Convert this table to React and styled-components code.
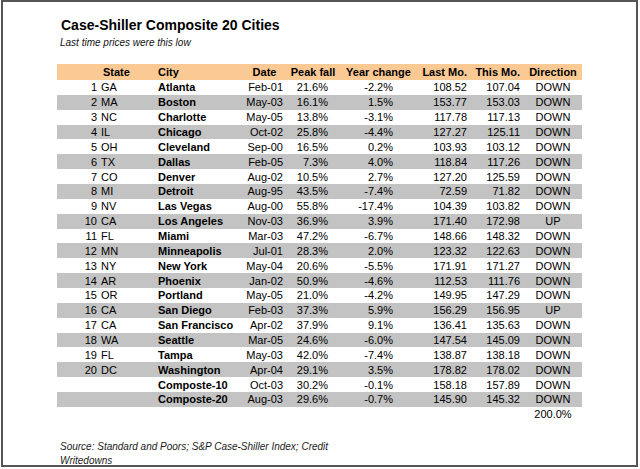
import React from 'react';
import styled, { createGlobalStyle } from 'styled-components';

const GlobalStyle = createGlobalStyle`
  html, body {
    margin: 0;
    padding: 0;
    background: #fff;
  }
  body {
    font-family: "Liberation Sans", Arial, sans-serif;
    color: #000;
  }
`;

const rows = [
  ['1', 'GA', 'Atlanta', 'Feb-01', '21.6%', '-2.2%', '108.52', '107.04', 'DOWN'],
  ['2', 'MA', 'Boston', 'May-03', '16.1%', '1.5%', '153.77', '153.03', 'DOWN'],
  ['3', 'NC', 'Charlotte', 'May-05', '13.8%', '-3.1%', '117.78', '117.13', 'DOWN'],
  ['4', 'IL', 'Chicago', 'Oct-02', '25.8%', '-4.4%', '127.27', '125.11', 'DOWN'],
  ['5', 'OH', 'Cleveland', 'Sep-00', '16.5%', '0.2%', '103.93', '103.12', 'DOWN'],
  ['6', 'TX', 'Dallas', 'Feb-05', '7.3%', '4.0%', '118.84', '117.26', 'DOWN'],
  ['7', 'CO', 'Denver', 'Aug-02', '10.5%', '2.7%', '127.20', '125.59', 'DOWN'],
  ['8', 'MI', 'Detroit', 'Aug-95', '43.5%', '-7.4%', '72.59', '71.82', 'DOWN'],
  ['9', 'NV', 'Las Vegas', 'Aug-00', '55.8%', '-17.4%', '104.39', '103.82', 'DOWN'],
  ['10', 'CA', 'Los Angeles', 'Nov-03', '36.9%', '3.9%', '171.40', '172.98', 'UP'],
  ['11', 'FL', 'Miami', 'Mar-03', '47.2%', '-6.7%', '148.66', '148.32', 'DOWN'],
  ['12', 'MN', 'Minneapolis', 'Jul-01', '28.3%', '2.0%', '123.32', '122.63', 'DOWN'],
  ['13', 'NY', 'New York', 'May-04', '20.6%', '-5.5%', '171.91', '171.27', 'DOWN'],
  ['14', 'AR', 'Phoenix', 'Jan-02', '50.9%', '-4.6%', '112.53', '111.76', 'DOWN'],
  ['15', 'OR', 'Portland', 'May-05', '21.0%', '-4.2%', '149.95', '147.29', 'DOWN'],
  ['16', 'CA', 'San Diego', 'Feb-03', '37.3%', '5.9%', '156.29', '156.95', 'UP'],
  ['17', 'CA', 'San Francisco', 'Apr-02', '37.9%', '9.1%', '136.41', '135.63', 'DOWN'],
  ['18', 'WA', 'Seattle', 'Mar-05', '24.6%', '-6.0%', '147.54', '145.09', 'DOWN'],
  ['19', 'FL', 'Tampa', 'May-03', '42.0%', '-7.4%', '138.87', '138.18', 'DOWN'],
  ['20', 'DC', 'Washington', 'Apr-04', '29.1%', '3.5%', '178.82', '178.02', 'DOWN'],
  ['', '', 'Composte-10', 'Oct-03', '30.2%', '-0.1%', '158.18', '157.89', 'DOWN'],
  ['', '', 'Composte-20', 'Aug-03', '29.6%', '-0.7%', '145.90', '145.32', 'DOWN'],
];

const Frame = styled.div`
  box-sizing: border-box;
  margin-left: 1px;
  width: 637px;
  height: 467px;
  border: 2px solid #555;
  box-shadow: 0 1px 0 #c8c8c8;
  padding: 15px 0 0 54px;
`;

const Title = styled.h1`
  margin: 0 0 0 4px;
  font-size: 14px;
  line-height: 16px;
  font-weight: bold;
`;

const Subtitle = styled.div`
  margin: 4px 0 0 3px;
  font-size: 10px;
  line-height: 12px;
  font-style: italic;
  color: #111;
`;

const Table = styled.div`
  margin-top: 15px;
  width: 525px;
`;

const Row = styled.div`
  display: grid;
  grid-template-columns: 42px 56px 89px 41px 56px 75px 53px 55px 58px;
  align-items: center;
  height: ${p => (p.$head ? '16px' : '14.86px')};
  background: ${p => (p.$head ? '#fbc993' : p.$shade ? '#c3c3c3' : 'transparent')};
  font-size: 11px;
  font-weight: ${p => (p.$head ? 'bold' : 'normal')};
  white-space: nowrap;
`;

const Cell = styled.div`
  text-align: ${p => p.$align || 'left'};
  padding-left: ${p => p.$pl || 0}px;
  padding-right: ${p => p.$pr || 0}px;
  font-weight: ${p => (p.$bold ? 'bold' : 'inherit')};
`;

const Source = styled.div`
  margin: 18px 0 0 3px;
  width: 290px;
  font-size: 10px;
  line-height: 14px;
  font-style: italic;
  color: #1a1a1a;
`;

export default function App() {
  return (
    <>
      <GlobalStyle />
      <Frame>
        <Title>Case-Shiller Composite 20 Cities</Title>
        <Subtitle>Last time prices were this low</Subtitle>
        <Table>
          <Row $head>
            <Cell />
            <Cell $pl={4}>State</Cell>
            <Cell $pl={3}>City</Cell>
            <Cell $align="center">Date</Cell>
            <Cell $align="center">Peak fall</Cell>
            <Cell $align="center">Year change</Cell>
            <Cell $align="right" $pr={2}>Last Mo.</Cell>
            <Cell $align="right" $pr={4}>This Mo.</Cell>
            <Cell $align="center">Direction</Cell>
          </Row>
          {rows.map((r, i) => (
            <Row key={r[2]} $shade={i % 2 === 1}>
              <Cell $align="right" $pr={2}>{r[0]}</Cell>
              <Cell $pl={2}>{r[1]}</Cell>
              <Cell $pl={3} $bold>{r[2]}</Cell>
              <Cell $align="right" $pr={2}>{r[3]}</Cell>
              <Cell $align="right" $pr={13}>{r[4]}</Cell>
              <Cell $align="right" $pr={23}>{r[5]}</Cell>
              <Cell $align="right" $pr={2}>{r[6]}</Cell>
              <Cell $align="right" $pr={4}>{r[7]}</Cell>
              <Cell $align="center">{r[8]}</Cell>
            </Row>
          ))}
          <Row>
            <Cell />
            <Cell />
            <Cell />
            <Cell />
            <Cell />
            <Cell />
            <Cell />
            <Cell />
            <Cell $align="center">200.0%</Cell>
          </Row>
        </Table>
        <Source>Source: Standard and Poors; S&amp;P Case-Shiller Index; Credit Writedowns</Source>
      </Frame>
    </>
  );
}
